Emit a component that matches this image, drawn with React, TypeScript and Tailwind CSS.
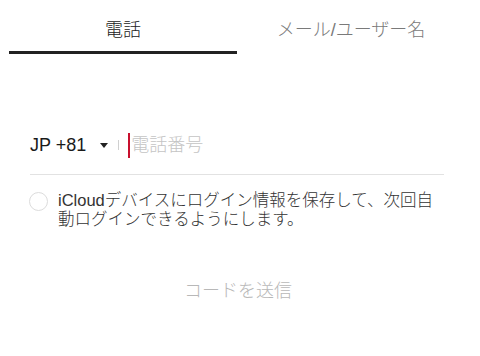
export default function App() {
  return (
    <div className="w-[480px] h-[356px] bg-white overflow-hidden font-light font-['Liberation_Sans','Noto_Sans_CJK_JP',sans-serif]">
      <div className="flex pl-[9px] pr-[15px]">
        <div className="flex-1 h-[54px] flex flex-col items-center justify-between">
          <span className="pt-[18px] text-[18px] leading-[24px] text-[#222]">電話</span>
          <div className="w-full h-[3px] bg-[#222]" />
        </div>
        <div className="flex-1 h-[54px] flex flex-col items-center">
          <span className="pt-[18px] text-[18px] leading-[24px] text-[#7a7a7a]">メール/ユーザー名</span>
        </div>
      </div>

      <div className="ml-[30px] w-[414px]">
        <div className="mt-[71px] h-[40px] flex items-center">
          <span className="text-[18px] text-[#1a1a1a]">JP +81</span>
          <svg className="ml-[14px]" width="8" height="5" viewBox="0 0 8 5">
            <path d="M0 0 L8 0 L4 5 Z" fill="#222" />
          </svg>
          <div className="ml-[10px] w-px h-[10px] bg-[#d0d0d0]" />
          <div className="ml-[9px] w-[2px] h-[25px] bg-[#c8102e]" />
          <span className="ml-[1px] text-[18px] text-[#c4c4c4]">電話番号</span>
        </div>
        <div className="mt-[9px] h-px bg-[#e2e2e2]" />
      </div>

      <div className="mt-[16px] ml-[29px] flex items-start">
        <div className="mt-[1px] w-[19px] h-[19px] rounded-full border border-[#dcdcdc]" />
        <p className="ml-[10px] text-[16.5px] leading-[19px] text-[#333]">
          iCloudデバイスにログイン情報を保存して、次回自
          <br />
          動ログインできるようにします。
        </p>
      </div>

      <div className="mt-[42px] h-[40px] flex items-center justify-center pr-[4px]">
        <span className="text-[18px] text-[#b8b8b8]">コードを送信</span>
      </div>
    </div>
  );
}
